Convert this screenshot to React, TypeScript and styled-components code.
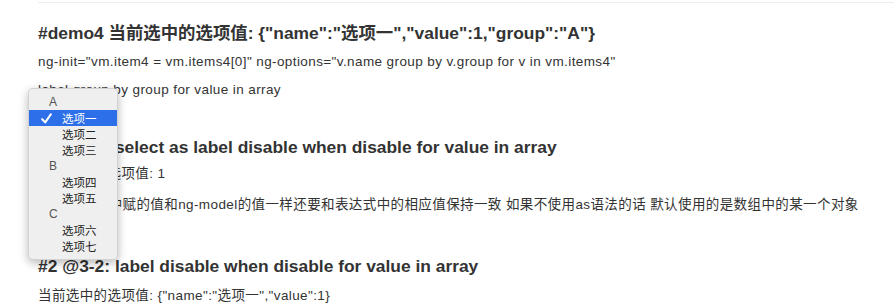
import React from "react";
import styled, { createGlobalStyle } from "styled-components";

const GlobalStyle = createGlobalStyle`
  html, body {
    margin: 0;
    padding: 0;
    background: #fff;
  }
  body {
    font-family: "Liberation Sans", "Noto Sans CJK SC", sans-serif;
    color: #333;
  }
`;

type Option = { name: string; group: string };

const options: Option[] = [
  { name: "选项一", group: "A" },
  { name: "选项二", group: "A" },
  { name: "选项三", group: "A" },
  { name: "选项四", group: "B" },
  { name: "选项五", group: "B" },
  { name: "选项六", group: "C" },
  { name: "选项七", group: "C" },
];

const App = () => {
  const groups = Array.from(new Set(options.map((o) => o.group)));
  const selected = "选项一";

  return (
    <Page>
      <GlobalStyle />
      <Rule />
      <Heading $top={20}>
        #demo4 当前选中的选项值: {'{"name":"选项一","value":1,"group":"A"}'}
      </Heading>
      <Text $top={10}>
        ng-init="vm.item4 = vm.items4[0]" ng-options="v.name group by v.group for v in vm.items4"
      </Text>
      <Text $top={10}>label group by group for value in array</Text>

      <Heading $top={38}>#1 @3-1: select as label disable when disable for value in array</Heading>
      <Text $top={8}>当前选中的选项值: 1</Text>
      <Text $top={13}>
        as前表达式中赋的值和ng-model的值一样还要和表达式中的相应值保持一致 如果不使用as语法的话 默认使用的是数组中的某一个对象
      </Text>

      <Heading $top={42}>#2 @3-2: label disable when disable for value in array</Heading>
      <Text $top={11}>当前选中的选项值: {'{"name":"选项一","value":1}'}</Text>

      <Popup>
        {groups.map((g) => (
          <React.Fragment key={g}>
            <GroupLabel>{g}</GroupLabel>
            {options
              .filter((o) => o.group === g)
              .map((o) => (
                <Item key={o.name} $active={o.name === selected}>
                  <Check>
                    {o.name === selected && (
                      <svg width="11" height="11" viewBox="0 0 11 11">
                        <path
                          d="M1.2 6.2 L4.2 9.4 L9.8 1.4"
                          fill="none"
                          stroke="#fff"
                          strokeWidth="2.1"
                          strokeLinecap="round"
                          strokeLinejoin="round"
                        />
                      </svg>
                    )}
                  </Check>
                  {o.name}
                </Item>
              ))}
          </React.Fragment>
        ))}
      </Popup>
    </Page>
  );
};

const Page = styled.div`
  position: relative;
  width: 894px;
  height: 308px;
  overflow: hidden;
  padding: 2px 0 0 38px;
  box-sizing: border-box;
`;

const Rule = styled.div`
  border-top: 1px solid #eee;
  width: 100%;
`;

const Heading = styled.h3<{ $top: number }>`
  margin: ${(p) => p.$top}px 0 0;
  font-size: 17.4px;
  line-height: 20px;
  font-weight: bold;
  color: #333;
  white-space: nowrap;
`;

const Text = styled.p<{ $top: number }>`
  margin: ${(p) => p.$top}px 0 0;
  font-size: 13.5px;
  letter-spacing: 0.4px;
  line-height: 18px;
  color: #333;
  white-space: nowrap;
`;

const Popup = styled.div`
  position: absolute;
  left: 28px;
  top: 88px;
  width: 90px;
  padding: 5px 0;
  box-sizing: border-box;
  background: #efefef;
  border: 1px solid rgba(0, 0, 0, 0.12);
  border-radius: 5px;
  box-shadow: 0 3px 10px rgba(0, 0, 0, 0.28);
  font-family: "Noto Sans CJK SC", "Liberation Sans", sans-serif;
  font-size: 11.5px;
`;

const GroupLabel = styled.div`
  height: 16px;
  line-height: 16px;
  padding-left: 20px;
  color: #555;
  font-family: "Liberation Sans", sans-serif;
  font-size: 12px;
`;

const Item = styled.div<{ $active: boolean }>`
  display: flex;
  align-items: center;
  height: 16px;
  color: ${(p) => (p.$active ? "#fff" : "#222")};
  background: ${(p) => (p.$active ? "#2d6fe8" : "transparent")};
`;

const Check = styled.span`
  display: flex;
  align-items: center;
  justify-content: center;
  width: 33px;
  height: 16px;
  padding-left: 2px;
  box-sizing: border-box;
`;

export default App;
